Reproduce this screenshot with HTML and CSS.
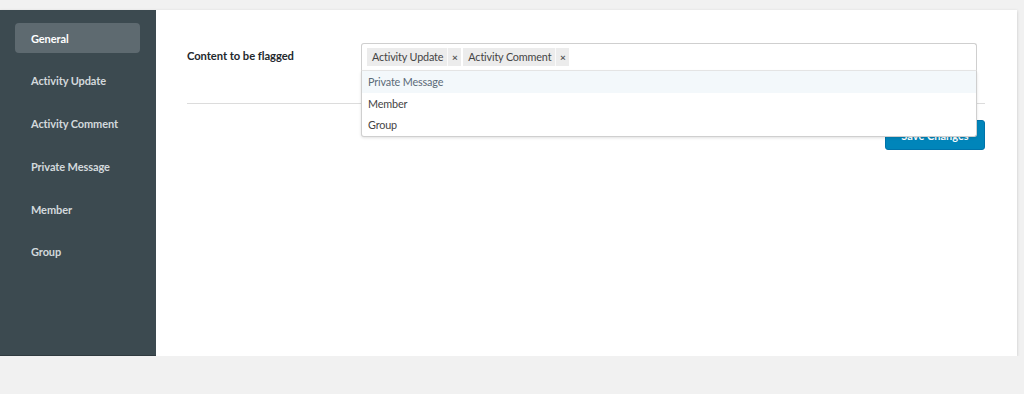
FILE: index.html
```html
<!DOCTYPE html>
<html>
<head>
<meta charset="utf-8">
<link rel="stylesheet" href="styles.css">
</head>
<body>
<div class="panel">
  <nav class="sidebar">
    <div class="nav-item active">General</div>
    <div class="nav-item">Activity Update</div>
    <div class="nav-item">Activity Comment</div>
    <div class="nav-item">Private Message</div>
    <div class="nav-item">Member</div>
    <div class="nav-item">Group</div>
  </nav>
  <main class="main">
    <div class="field-row">
      <div class="field-label">Content to be flagged</div>
      <div class="select">
        <div class="select-box">
          <span class="tag"><span class="tag-text">Activity Update</span><span class="tag-x">×</span></span>
          <span class="tag"><span class="tag-text">Activity Comment</span><span class="tag-x">×</span></span>
        </div>
        <ul class="dropdown">
          <li class="opt highlighted">Private Message</li>
          <li class="opt">Member</li>
          <li class="opt">Group</li>
        </ul>
      </div>
    </div>
    <hr class="divider">
    <div class="actions">
      <button class="btn-primary">Save Changes</button>
    </div>
  </main>
</div>
</body>
</html>
```
FILE: styles.css
```css
* { box-sizing: border-box; }
html, body { margin: 0; padding: 0; }
body {
  background: #f1f1f1;
  font-family: Lato, "Liberation Sans", sans-serif;
  font-size: 11px;
  color: #333;
  padding-top: 10px;
}
.panel {
  display: flex;
  width: 1017px;
  height: 346px;
  background: #fff;
  box-shadow: 0 1px 3px rgba(0,0,0,0.18);
}
.sidebar {
  width: 156px;
  flex: none;
  background: #3c4a50;
  padding: 13px 16px 0 15px;
  border-bottom: 1px solid #2f3a3f;
}
.nav-item {
  height: 30px;
  margin-bottom: 12.8px;
  padding-left: 16px;
  display: flex;
  align-items: center;
  color: #d3d9dc;
  font-weight: 700;
  font-size: 11px;
  letter-spacing: -0.1px;
  border-radius: 4px;
}
.nav-item.active {
  background: #5e6a70;
  color: #fff;
}
.main {
  flex: 1;
  padding: 33px 32px 0 31px;
}
.field-row {
  display: flex;
  align-items: flex-start;
}
.field-label {
  width: 174px;
  flex: none;
  padding-top: 6px;
  font-weight: 700;
  color: #23282d;
  font-size: 11.2px;
  letter-spacing: -0.05px;
}
.select {
  position: relative;
  width: 616px;
}
.select-box {
  height: 28px;
  border: 1px solid #cfcfcf;
  border-bottom-color: #e8e8e8;
  border-radius: 3px 3px 0 0;
  padding: 4px 5px 0;
  display: flex;
  gap: 2px;
  background: #fff;
}
.tag {
  display: flex;
  height: 18px;
  background: #ececec;
  color: #444;
  font-size: 10.8px;
  letter-spacing: -0.15px;
}
.tag-text {
  padding: 0 4px 0 5px;
  line-height: 18px;
}
.tag-x {
  width: 14px;
  border-left: 1px solid #fafafa;
  text-align: center;
  line-height: 18px;
  font-size: 10px;
  font-weight: 700;
  color: #555;
  letter-spacing: 0;
}
.dropdown {
  position: absolute;
  left: 0;
  top: 28px;
  width: 616px;
  margin: 0;
  padding: 0;
  list-style: none;
  background: #fff;
  border: 1px solid #cfcfcf;
  border-top: none;
  border-radius: 0 0 3px 3px;
  box-shadow: 0 1px 3px rgba(0,0,0,0.12);
}
.opt {
  height: 21.5px;
  line-height: 21px;
  padding-left: 6px;
  color: #444;
  font-size: 10.8px;
  letter-spacing: -0.15px;
}
.opt.highlighted {
  background: #f3f8fb;
  color: #5b6b78;
}
.divider {
  margin: 32px 0 0;
  border: none;
  border-top: 1px solid #dcdcdc;
}
.actions {
  display: flex;
  justify-content: flex-end;
  padding-top: 16px;
}
.btn-primary {
  width: 100px;
  height: 30px;
  background: #0085ba;
  border: 1px solid #0073aa;
  border-radius: 3px;
  color: #fff;
  font-family: inherit;
  font-weight: 700;
  font-size: 11px;
}
```
